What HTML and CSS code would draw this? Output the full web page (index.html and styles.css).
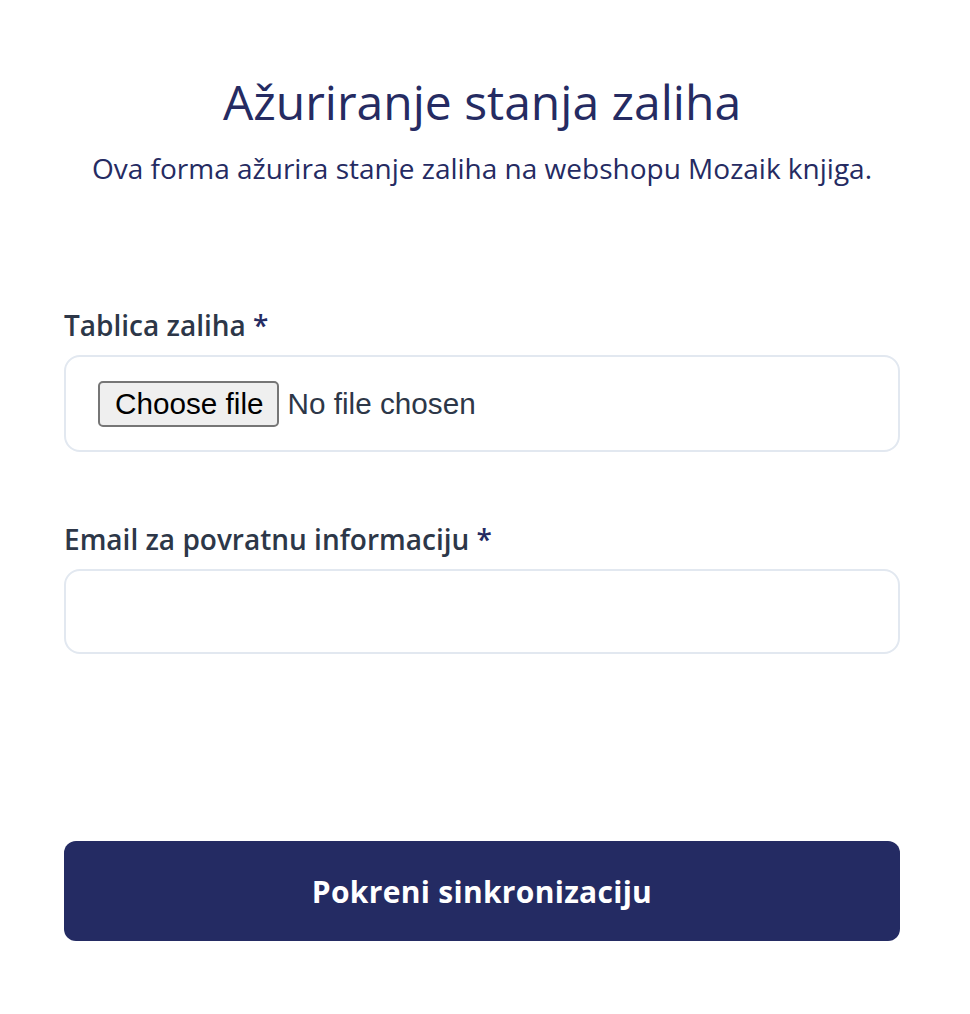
FILE: index.html
```html
<!DOCTYPE html>
<html lang="hr">
<head>
    <meta charset="UTF-8">
    <meta name="viewport" content="width=device-width, initial-scale=1.0">
    <title>Ažuriranje stanja zaliha</title>
    <link rel="stylesheet" href="styles.css">
</head>
<body>
    <div class="container">
        <div class="header">
            <h1>Ažuriranje stanja zaliha</h1>
            <p class="subtitle">Ova forma ažurira stanje zaliha na webshopu Mozaik knjiga.</p>
        </div>

        <form class="sync-form">
            <div class="field">
                <label class="field-label" for="stockFile">Tablica zaliha <span class="required">*</span></label>
                <div class="file-box">
                    <input type="file" id="stockFile" name="stockFile" class="file-input">
                    <label for="stockFile" class="file-btn">Choose file</label>
                    <span class="file-name">No file chosen</span>
                </div>
            </div>

            <div class="field">
                <label class="field-label" for="email">Email za povratnu informaciju <span class="required">*</span></label>
                <input type="email" id="email" name="email" class="text-input">
            </div>

            <button type="submit" class="submit-btn">Pokreni sinkronizaciju</button>
        </form>
    </div>
</body>
</html>
```

FILE: styles.css
```css
* {
    margin: 0;
    padding: 0;
    box-sizing: border-box;
}

body {
    font-family: 'Open Sans', 'Noto Sans', sans-serif;
    background: #ffffff;
    color: #2d3748;
}

.container {
    padding: 70px 70px 60px 64px;
}

.header {
    text-align: center;
    color: #252b62;
}

.header h1 {
    font-size: 48px;
    font-weight: 400;
    line-height: 64px;
}

.header .subtitle {
    font-size: 28px;
    line-height: 38px;
    margin-top: 15px;
}

.sync-form {
    margin-top: 119px;
}

.field {
    margin-bottom: 68px;
}

.field-label {
    display: block;
    font-size: 28px;
    font-weight: 600;
    line-height: 38px;
    margin-bottom: 11px;
}

.required {
    color: #252b62;
}

.file-box {
    display: flex;
    align-items: center;
    gap: 9px;
    border: 2px solid #e2e8f0;
    border-radius: 16px;
    padding: 24px 32px 23px;
    font-family: 'Liberation Sans', Arial, sans-serif;
    font-size: 29.7px;
}

.file-input {
    display: none;
}

.file-btn {
    display: flex;
    align-items: center;
    height: 46px;
    padding: 0 13px 0 15px;
    color: #000;
    background: #efefef;
    border: 2px solid #767676;
    border-radius: 5px;
    cursor: pointer;
}

.file-name {
    color: #2d3748;
}

.text-input {
    display: block;
    width: 100%;
    height: 85px;
    border: 2px solid #e2e8f0;
    border-radius: 16px;
    padding: 0 32px;
    font-family: inherit;
    font-size: 24px;
    outline: none;
}

.submit-btn {
    display: block;
    width: 100%;
    height: 100px;
    margin-top: 187px;
    background: #242b63;
    color: #ffffff;
    border: none;
    border-radius: 12px;
    font-family: 'Open Sans', sans-serif;
    font-size: 30px;
    font-weight: 700;
    letter-spacing: 0.3px;
    cursor: pointer;
}
```
